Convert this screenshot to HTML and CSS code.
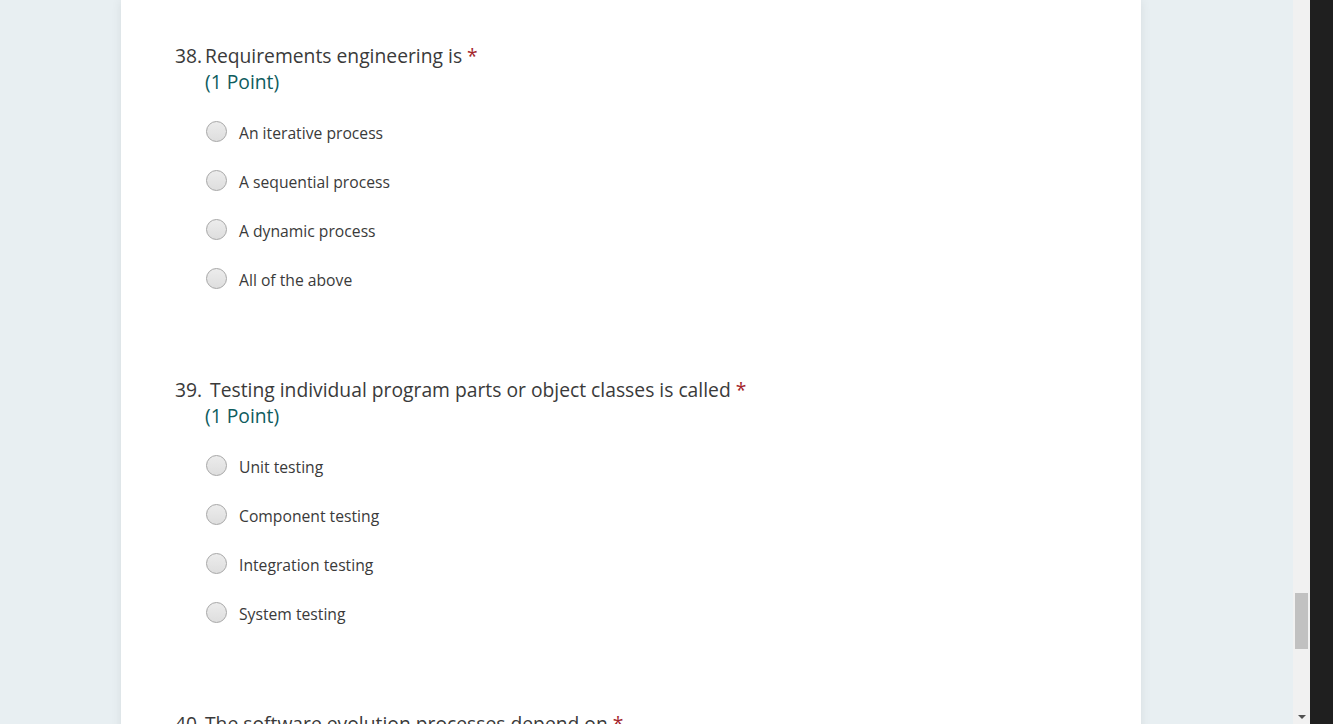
FILE: index.html
```html
<!DOCTYPE html>
<html lang="en">
<head>
    <meta charset="UTF-8">
    <meta name="viewport" content="width=device-width, initial-scale=1.0">
    <title>Quiz</title>
    <link rel="stylesheet" href="styles.css">
</head>
<body>
    <div class="page">
        <div class="viewport">
            <div class="card">

                <!-- Pergunta 38 -->
                <div class="question">
                    <div class="q-title"><span class="q-num">38.</span>Requirements engineering is <span class="req">*</span></div>
                    <div class="q-points">(1 Point)</div>
                    <ul class="options">
                        <li><span class="radio"></span>An iterative process</li>
                        <li><span class="radio"></span>A sequential process</li>
                        <li><span class="radio"></span>A dynamic process</li>
                        <li><span class="radio"></span>All of the above</li>
                    </ul>
                </div>

                <!-- Pergunta 39 -->
                <div class="question">
                    <div class="q-title"><span class="q-num">39.</span>&nbsp;Testing individual program parts or object classes is called <span class="req">*</span></div>
                    <div class="q-points">(1 Point)</div>
                    <ul class="options">
                        <li><span class="radio"></span>Unit testing</li>
                        <li><span class="radio"></span>Component testing</li>
                        <li><span class="radio"></span>Integration testing</li>
                        <li><span class="radio"></span>System testing</li>
                    </ul>
                </div>

                <!-- Pergunta 40 -->
                <div class="question">
                    <div class="q-title"><span class="q-num">40.</span>The software evolution processes depend on <span class="req">*</span></div>
                    <div class="q-points">(1 Point)</div>
                </div>

            </div>
        </div>
        <div class="scrollbar">
            <div class="thumb"></div>
            <div class="arrow"></div>
        </div>
        <div class="edge"></div>
    </div>
</body>
</html>
```

FILE: styles.css
```css
* {
    margin: 0;
    padding: 0;
    box-sizing: border-box;
}

body {
    font-family: "Open Sans", "Noto Sans", sans-serif;
    color: #333;
    overflow: hidden;
    height: 724px;
}

.page {
    display: flex;
    height: 724px;
}

.viewport {
    flex: 1;
    background-color: #e8eff2;
    overflow: hidden;
}

.card {
    width: 1020px;
    min-height: 800px;
    margin-left: 121px;
    background-color: #fff;
    box-shadow: 0 0 10px rgba(0, 0, 0, 0.08);
    padding-top: 43px;
    padding-left: 54px;
}

.question {
    margin-bottom: 74px;
}

.q-title {
    font-size: 19.3px;
    line-height: 26px;
    color: #3a3a3a;
}

.q-num {
    display: inline-block;
    width: 30px;
}

.req {
    color: #a4262c;
}

.q-points {
    font-size: 19.3px;
    line-height: 26px;
    color: #0f5c5e;
    padding-left: 30px;
}

.options {
    list-style: none;
    padding-top: 12px;
    padding-left: 31px;
}

.options li {
    display: flex;
    align-items: center;
    height: 49px;
    padding-top: 2px;
    font-size: 15.7px;
    color: #3a3a3a;
}

.radio {
    width: 21px;
    height: 21px;
    margin-top: -3px;
    border-radius: 50%;
    border: 1px solid #a6a6a6;
    background: linear-gradient(#ececec, #dedede);
    margin-right: 12px;
    flex-shrink: 0;
}

/* barra de rolagem falsa */
.scrollbar {
    width: 17px;
    background-color: #f1f1f1;
    position: relative;
}

.thumb {
    position: absolute;
    left: 2px;
    top: 593px;
    width: 13px;
    height: 56px;
    background-color: #c1c1c1;
}

.arrow {
    position: absolute;
    left: 5px;
    bottom: 5px;
    width: 0;
    height: 0;
    border-left: 4px solid transparent;
    border-right: 4px solid transparent;
    border-top: 4px solid #505050;
}

.edge {
    width: 23px;
    background-color: #1f1f1f;
}
```
